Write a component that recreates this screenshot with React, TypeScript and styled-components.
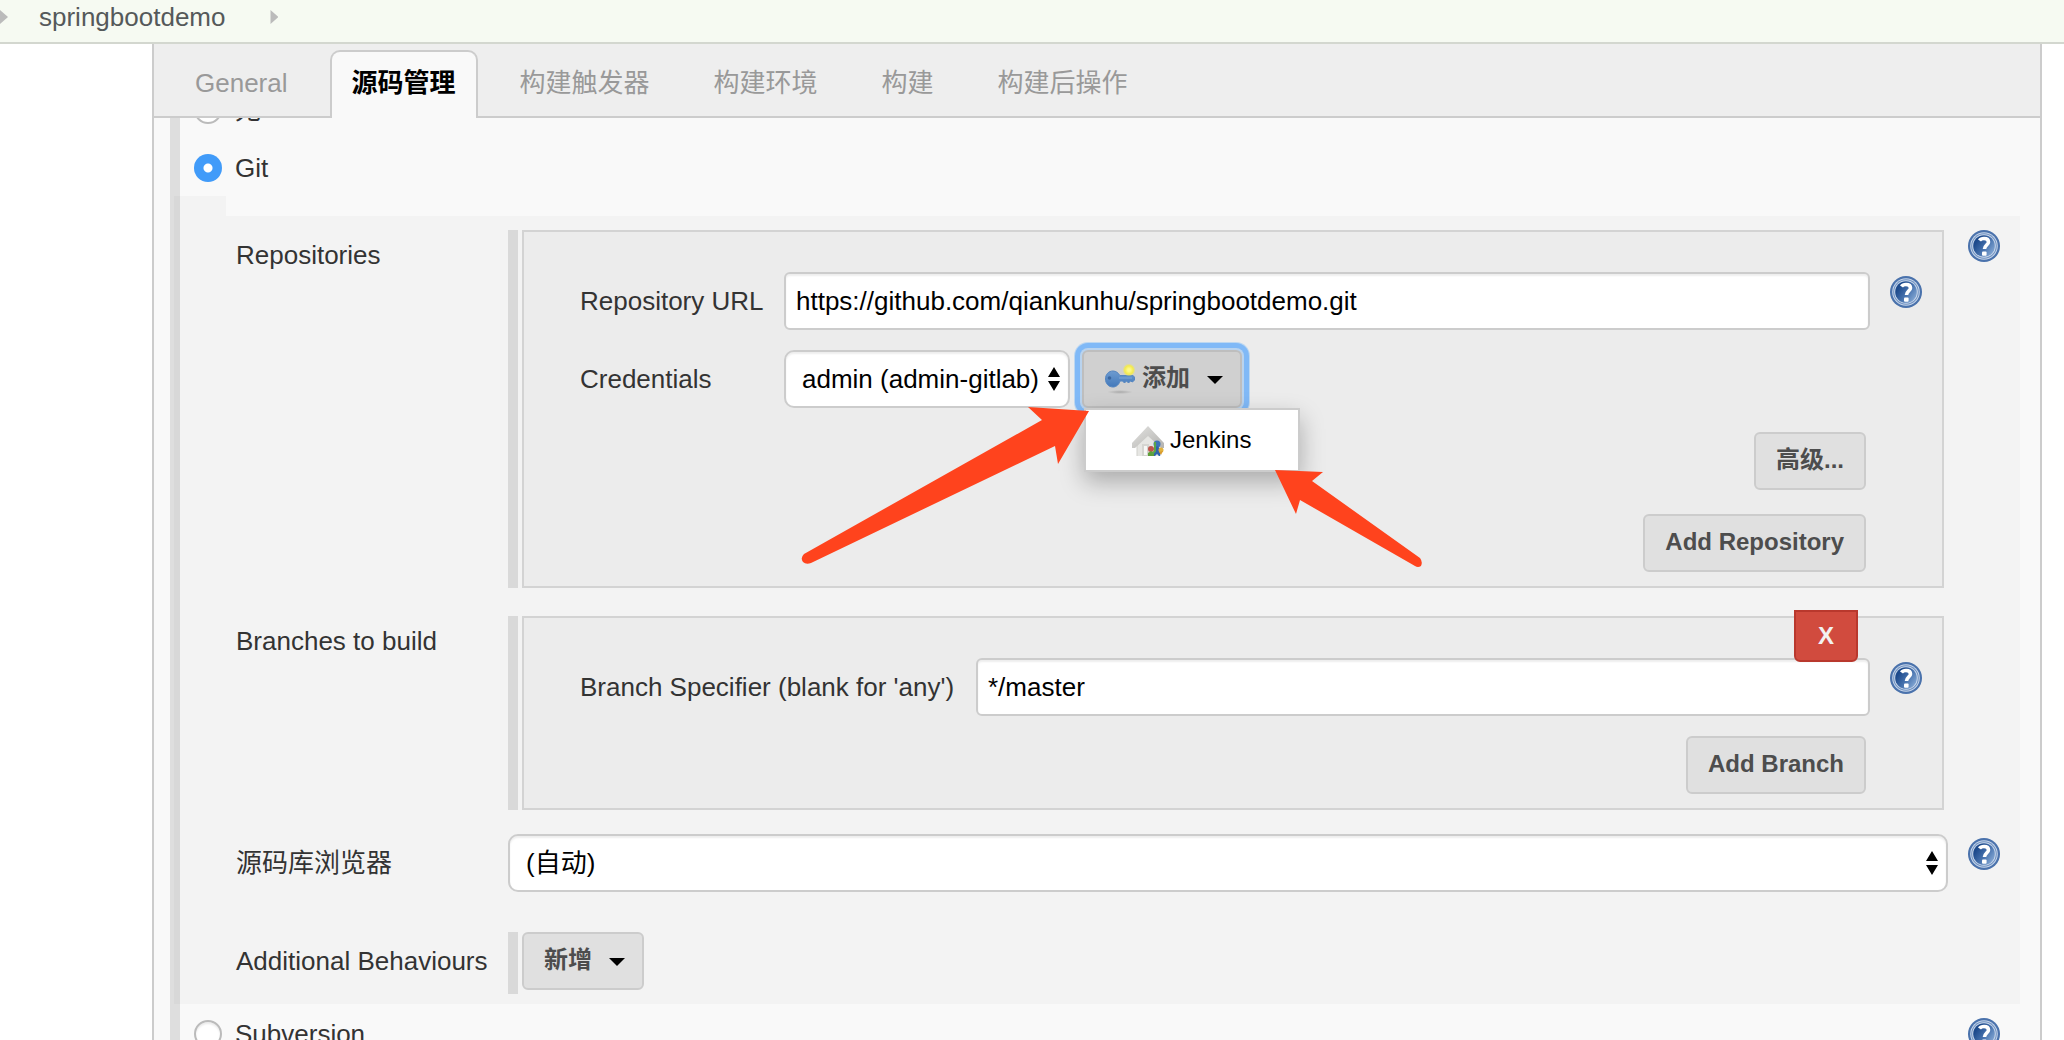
import React from "react";
import styled, { createGlobalStyle, css } from "styled-components";

const sans = `"Liberation Sans", "Noto Sans CJK SC", sans-serif`;

const GlobalStyle = createGlobalStyle`
  *, *::before, *::after { box-sizing: border-box; }
  body {
    margin: 0;
    background: #fff;
    color: #333;
    font: 26px/30px ${sans};
  }
  input, select, button { font-family: ${sans}; }
`;

const Page = styled.div`
  display: flex;
  flex-direction: column;
  height: 100vh;
  overflow: hidden;
`;

const Breadcrumbs = styled.nav`
  display: flex;
  align-items: center;
  gap: 45px;
  flex: none;
  height: 44px;
  padding-bottom: 8px;
  background: #f6faf2;
  border-bottom: 2px solid #d3d7cf;
`;

const Crumb = styled.a`
  margin-left: -14px;
  color: #55595a;
  text-decoration: none;
`;

const Chevron = styled.span`
  width: 8px;
  height: 14px;
  background: #bbb;
  clip-path: polygon(0 0, 100% 50%, 0 100%);
`;

const Panel = styled.main`
  display: flex;
  flex-direction: column;
  flex: 1;
  min-height: 0;
  margin: 0 22px 0 152px;
  border: solid #ccc;
  border-width: 0 2px;
  background: #f9f9f9;
`;

const TabBar = styled.nav`
  display: flex;
  align-items: flex-end;
  gap: 20px;
  flex: none;
  height: 74px;
  padding: 0 19px;
  background: #eee;
  border-bottom: 2px solid #ccc;
`;

const Tab = styled.a<{ $active?: boolean }>`
  height: 68px;
  margin-bottom: -2px;
  padding: 16px 20px 0;
  border: 2px solid transparent;
  border-bottom: 0;
  border-radius: 10px 10px 0 0;
  color: #999;
  text-decoration: none;
  ${(p) =>
    p.$active &&
    css`
      background: #f9f9f9;
      border-color: #ccc;
      color: #000;
      font-weight: bold;
    `}
`;

const Viewport = styled.div`
  flex: 1;
  min-height: 0;
  overflow: hidden;
  padding: 0 20px 0 16px;
`;

/* The form is scrolled part of the way past its first option. */
const ScmSection = styled.form`
  display: flex;
  flex-direction: column;
  margin-top: -38px;
  border-left: 10px solid #dedede;
`;

const OptionRow = styled.div`
  display: flex;
  align-items: center;
  justify-content: space-between;
  height: 56px;
  margin-top: 2px;
  padding: 0 20px 0 14px;
`;

const OptionLabel = styled.label`
  display: flex;
  align-items: center;
  gap: 13px;
`;

const Radio = styled.input`
  appearance: none;
  width: 28px;
  height: 28px;
  margin: 0;
  border: 2px solid #bbb;
  border-radius: 50%;
  background: #fff;
  box-shadow: inset 0 2px 2px rgba(0, 0, 0, 0.08);
  &:checked {
    border: 0;
    background: radial-gradient(circle, #fff 0 4px, #419bf9 5px);
    box-shadow: none;
  }
`;

const shade = "rgba(0, 0, 0, 0.025)";

const Nested = styled.div`
  margin-left: -6px;
`;

const NestedLead = styled.div`
  width: 52px;
  height: 20px;
  background: ${shade};
`;

const NestedBody = styled.div`
  padding: 14px 20px 10px 62px;
  background: ${shade};
`;

const FieldRow = styled.div<{ $space?: number }>`
  display: grid;
  grid-template-columns: 272px minmax(0, 1fr) 32px;
  align-items: start;
  margin-top: ${(p) => p.$space ?? 0}px;
`;

const RowLabel = styled.label<{ $top: number }>`
  padding-top: ${(p) => p.$top}px;
  white-space: nowrap;
`;

const Repeatable = styled.div<{ $bottom?: number }>`
  display: flex;
  margin-right: 24px;
  padding-left: 4px;
  padding-bottom: ${(p) => p.$bottom ?? 0}px;
  border-left: 10px solid #d9d9d9;
`;

const Chunk = styled.div`
  position: relative;
  display: flex;
  flex-direction: column;
  gap: 20px;
  flex: 1;
  min-width: 0;
  padding: 40px 20px 14px 56px;
  border: 2px solid #d3d3d3;
  background: #ececec;
`;

const ChunkRow = styled.div<{ $label: number }>`
  display: grid;
  grid-template-columns: ${(p) => p.$label}px minmax(0, 1fr) 32px;
  align-items: start;
`;

const Actions = styled.div<{ $space?: number }>`
  display: flex;
  flex-direction: column;
  align-items: flex-end;
  gap: 24px;
  margin-top: ${(p) => p.$space ?? 0}px;
  padding-right: 56px;
`;

const controlFrame = css`
  height: 58px;
  margin: 0;
  border: 2px solid #ccc;
  background: #fff;
  box-shadow: inset 0 2px 2px rgba(0, 0, 0, 0.07);
  color: #000;
  font-size: 26px;
`;

const TextBox = styled.input`
  ${controlFrame}
  width: calc(100% - 20px);
  padding: 0 10px;
  border-radius: 6px;
`;

const SelectWrap = styled.div<{ $width?: number; $end?: number }>`
  position: relative;
  width: ${(p) => (p.$width ? `${p.$width}px` : "auto")};
  margin-right: ${(p) => p.$end ?? 0}px;
`;

const Select = styled.select`
  ${controlFrame}
  appearance: none;
  width: 100%;
  padding: 0 30px 0 16px;
  border-radius: 10px;
`;

const SelectArrows = styled.svg`
  position: absolute;
  top: 17px;
  right: 9px;
  width: 14px;
  height: 24px;
  pointer-events: none;
`;

const Button = styled.button<{ $pressed?: boolean }>`
  display: flex;
  align-items: center;
  height: 58px;
  margin: 0;
  padding: 0 20px 2px;
  border: 2px solid #ccc;
  border-radius: 6px;
  background: #e0e0e0;
  color: #4d4d4d;
  font-size: 24px;
  font-weight: bold;
  line-height: 30px;
  white-space: nowrap;
  ${(p) =>
    p.$pressed &&
    css`
      background: #d0d0d0;
      border-color: #bebebe;
      box-shadow: 0 0 0 2px #b9d3ee, 0 0 0 7px #80b9f7, 0 0 0 8px #bcd7f1;
    `}
`;

const Caret = styled.span`
  width: 16px;
  height: 8px;
  margin: 4px -3px 0 17px;
  background: #000;
  clip-path: polygon(0 0, 100% 0, 50% 100%);
`;

const DeleteButton = styled.button`
  position: absolute;
  top: -8px;
  right: 84px;
  width: 64px;
  height: 52px;
  padding: 0;
  border: 2px solid #b9382d;
  border-radius: 0 0 6px 6px;
  background: #d14b3e;
  color: #f2f2f2;
  font-size: 24px;
  font-weight: bold;
`;

const Inline = styled.div`
  display: flex;
  gap: 12px;
`;

const MenuAnchor = styled.div`
  position: relative;
`;

const Menu = styled.div`
  position: absolute;
  top: 58px;
  left: 2px;
  z-index: 1;
  width: 216px;
  border: 2px solid #ccc;
  background: #fff;
  box-shadow: 0 10px 24px rgba(0, 0, 0, 0.28);
`;

const MenuItem = styled.button`
  display: flex;
  align-items: center;
  gap: 6px;
  width: 100%;
  height: 60px;
  padding: 0 0 0 46px;
  border: 0;
  background: none;
  color: #000;
  font-size: 24px;
  line-height: 30px;
`;

const Pointers = styled.svg`
  position: absolute;
  top: 50px;
  left: -290px;
  z-index: 2;
  width: 640px;
  height: 180px;
  pointer-events: none;
`;

const HelpButton = styled.button<{ $top?: number }>`
  width: 32px;
  height: 32px;
  margin: ${(p) => p.$top ?? 0}px 0 0;
  padding: 0;
  border: 0;
  background: none;
  svg {
    display: block;
  }
`;

const KeySvg = styled.svg`
  flex: none;
  margin-right: 6px;
`;

function Help({ top, label }: { top?: number; label: string }) {
  return (
    <HelpButton type="button" $top={top} aria-label={`Help: ${label}`}>
      <svg width="32" height="32" viewBox="0 0 32 32">
        <defs>
          <linearGradient id="helpFill" x1="0" y1="0.2" x2="1" y2="0.9">
            <stop offset="0.15" stopColor="#1d4a8c" />
            <stop offset="0.55" stopColor="#4a75b0" />
            <stop offset="1" stopColor="#8fb1da" />
          </linearGradient>
        </defs>
        <circle cx="16" cy="16" r="16" fill="#4a72ac" />
        <circle cx="16" cy="16" r="13.8" fill="#c6d5e9" />
        <circle cx="16" cy="16" r="12.8" fill="#7092c2" />
        <circle cx="16" cy="16" r="11.8" fill="#c9d7ea" />
        <circle cx="16" cy="16" r="10.8" fill="url(#helpFill)" />
        <path
          d="M11.500 10.500c1-1.500 2.600-2 4.500-2 2.800 0 4.500 1.300 4.500 3.400 0 3-4 3.400-4 7.100"
          fill="none"
          stroke="#fff"
          strokeWidth="3.600"
        />
        <rect x="14" y="21.500" width="4.600" height="4.200" rx="1" fill="#fff" />
      </svg>
    </HelpButton>
  );
}

function KeyIcon() {
  return (
    <KeySvg width="32" height="32" viewBox="0 0 32 32" aria-hidden="true">
      <defs>
        <radialGradient id="keyGlow">
          <stop offset="0.2" stopColor="#fdf98a" />
          <stop offset="0.65" stopColor="#f3ea4e" />
          <stop offset="1" stopColor="#f3ea4e" stopOpacity="0" />
        </radialGradient>
        <linearGradient id="keyBlue" x1="0" y1="0" x2="0" y2="1">
          <stop offset="0" stopColor="#6d9bd0" />
          <stop offset="1" stopColor="#4379ba" />
        </linearGradient>
        <radialGradient id="keyShadow">
          <stop offset="0" stopColor="#aaa" />
          <stop offset="1" stopColor="#aaa" stopOpacity="0" />
        </radialGradient>
      </defs>
      <ellipse cx="16" cy="30" rx="13" ry="2" fill="url(#keyShadow)" />
      <path
        d="M9 9c3 0 5.500 2 6.800 4.500H28c1.500 0 2.500 1 2.500 2.500v2l-2 2-2-1-2 2-2-2-2 2-2-2h-2.500c-1 3.500-3.500 6-7 6-4.500 0-7.500-3.500-7.500-8s3-8 7.500-8z"
        fill="url(#keyBlue)"
        stroke="#5586c1"
      />
      <path d="M15 16h13" stroke="#7ea6d6" />
      <circle cx="5.500" cy="16" r="1.800" fill="#3b669f" />
      <circle cx="25" cy="8" r="6.500" fill="url(#keyGlow)" />
    </KeySvg>
  );
}

function HouseIcon() {
  return (
    <svg width="32" height="32" viewBox="0 0 32 32" aria-hidden="true">
      <defs>
        <linearGradient id="roof" x1="0" y1="0" x2="1" y2="1">
          <stop offset="0" stopColor="#e2e2e0" />
          <stop offset="1" stopColor="#b4b3b0" />
        </linearGradient>
      </defs>
      <path d="M5 16 16 8l11 8v17H5z" fill="#e6e6e3" stroke="#d0d0cc" />
      <path d="M10 20h7v13h-7z" fill="#d5d5d1" />
      <path d="M12 22h3v9h-3z" fill="#f7f7f5" />
      <path d="M16 2 32 19v5h-3L16 12 3 24H0v-5z" fill="url(#roof)" />
      <circle cx="19" cy="25" r="3" fill="#c0544c" />
      <path d="M16 32v-3l3-2 3 2v4h-4z" fill="#5f9f39" />
      <circle cx="25" cy="20" r="3.500" fill="#3f73b5" />
      <path d="M22 33v-8l3-3 4 3-1 8-3-3z" fill="#2f64ab" />
      <path d="M23 18v9l-3 3" fill="none" stroke="#5ba646" strokeWidth="2" />
      <circle cx="29" cy="26" r="2.500" fill="#e2b23d" />
      <path d="M27 28l4-1-2 4z" fill="#d99a2c" />
    </svg>
  );
}

function Arrows() {
  return (
    <SelectArrows viewBox="0 0 14 24" aria-hidden="true">
      <path d="M7 0l6 10H1zM7 24l6-10H1z" />
    </SelectArrows>
  );
}

const tabs = ["General", "源码管理", "构建触发器", "构建环境", "构建", "构建后操作"];

export default function App() {
  return (
    <>
      <GlobalStyle />
      <Page>
        <Breadcrumbs aria-label="Breadcrumb">
          <Chevron />
          <Crumb href="#job">springbootdemo</Crumb>
          <Chevron />
        </Breadcrumbs>
        <Panel>
          <TabBar>
            {tabs.map((name, i) => (
              <Tab key={name} href={`#section-${i}`} $active={i === 1}>
                {name}
              </Tab>
            ))}
          </TabBar>
          <Viewport>
            <ScmSection>
              <OptionRow>
                <OptionLabel>
                  <Radio type="radio" name="scm" />无
                </OptionLabel>
              </OptionRow>
              <OptionRow>
                <OptionLabel>
                  <Radio type="radio" name="scm" defaultChecked />
                  Git
                </OptionLabel>
              </OptionRow>
              <Nested>
                <NestedLead />
                <NestedBody>
                  <FieldRow>
                    <RowLabel as="div" $top={10}>
                      Repositories
                    </RowLabel>
                    <Repeatable>
                      <Chunk>
                        <ChunkRow $label={204}>
                          <RowLabel $top={14} htmlFor="repo-url">
                            Repository URL
                          </RowLabel>
                          <TextBox
                            id="repo-url"
                            defaultValue="https://github.com/qiankunhu/springbootdemo.git"
                          />
                          <Help top={4} label="Repository URL" />
                        </ChunkRow>
                        <ChunkRow $label={204}>
                          <RowLabel $top={14} htmlFor="credentials">
                            Credentials
                          </RowLabel>
                          <Inline>
                            <SelectWrap $width={286}>
                              <Select id="credentials">
                                <option>admin (admin-gitlab)</option>
                              </Select>
                              <Arrows />
                            </SelectWrap>
                            <MenuAnchor>
                              <Button type="button" $pressed>
                                <KeyIcon />
                                添加
                                <Caret />
                              </Button>
                              <Menu>
                                <MenuItem type="button">
                                  <HouseIcon />
                                  Jenkins
                                </MenuItem>
                              </Menu>
                              <Pointers viewBox="792 400 640 180" aria-hidden="true">
                                <path
                                  fill="#ff431d"
                                  d="M1089 411L1028 407L1042 420L804 554Q800 558 803 562Q806 565 811 563L1055 446L1058 464Z"
                                />
                                <path
                                  fill="#ff431d"
                                  d="M1275 470L1323 472L1312 481L1420 558Q1423 562 1421 566Q1418 568 1415 566L1300 500L1296 514Z"
                                />
                              </Pointers>
                            </MenuAnchor>
                          </Inline>
                        </ChunkRow>
                        <Actions $space={4}>
                          <Button type="button">高级...</Button>
                          <Button type="button">Add Repository</Button>
                        </Actions>
                      </Chunk>
                    </Repeatable>
                    <Help label="Repositories" />
                  </FieldRow>

                  <FieldRow $space={28}>
                    <RowLabel as="div" $top={10}>
                      Branches to build
                    </RowLabel>
                    <Repeatable>
                      <Chunk>
                        <ChunkRow $label={396}>
                          <RowLabel $top={14} htmlFor="branch">
                            Branch Specifier (blank for 'any')
                          </RowLabel>
                          <TextBox id="branch" defaultValue="*/master" />
                          <Help top={4} label="Branch Specifier" />
                        </ChunkRow>
                        <Actions>
                          <Button type="button">Add Branch</Button>
                        </Actions>
                        <DeleteButton type="button">X</DeleteButton>
                      </Chunk>
                    </Repeatable>
                  </FieldRow>

                  <FieldRow $space={24}>
                    <RowLabel $top={14} htmlFor="browser">
                      源码库浏览器
                    </RowLabel>
                    <SelectWrap $end={20}>
                      <Select id="browser">
                        <option>(自动)</option>
                      </Select>
                      <Arrows />
                    </SelectWrap>
                    <Help top={4} label="源码库浏览器" />
                  </FieldRow>

                  <FieldRow $space={40}>
                    <RowLabel as="div" $top={14}>
                      Additional Behaviours
                    </RowLabel>
                    <Repeatable $bottom={4}>
                      <Button type="button">
                        新增
                        <Caret />
                      </Button>
                    </Repeatable>
                  </FieldRow>
                </NestedBody>
              </Nested>
              <OptionRow>
                <OptionLabel>
                  <Radio type="radio" name="scm" />
                  Subversion
                </OptionLabel>
                <Help label="Subversion" />
              </OptionRow>
            </ScmSection>
          </Viewport>
        </Panel>
      </Page>
    </>
  );
}
